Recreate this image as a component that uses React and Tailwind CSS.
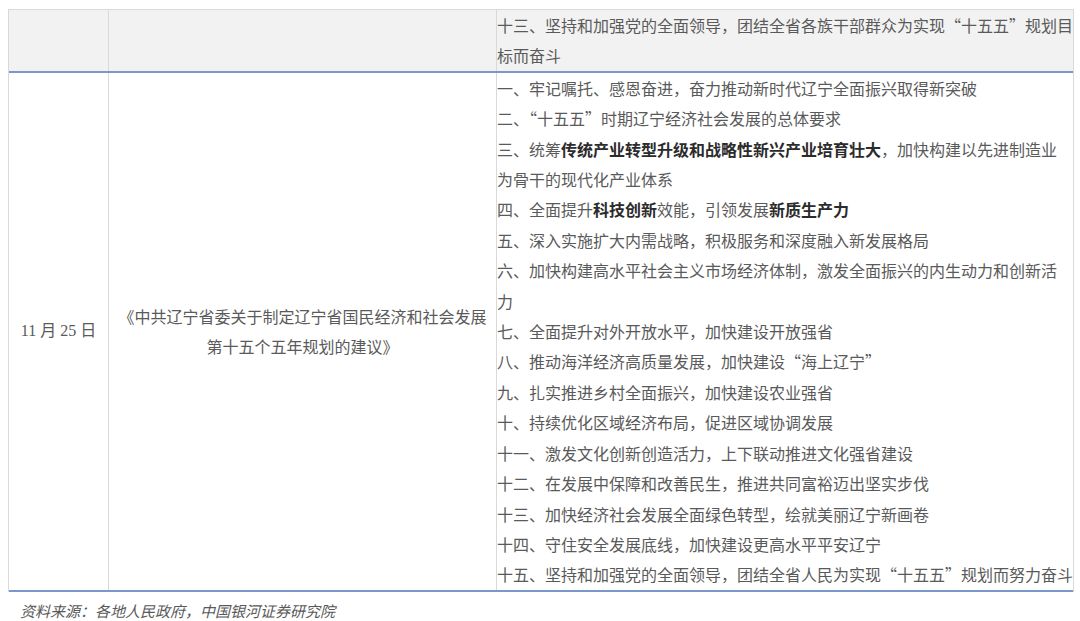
const FONT = { fontFamily: '"Noto Sans CJK SC", "Liberation Serif", sans-serif' }
const DATE_FONT = { fontFamily: '"Liberation Serif", "Noto Sans CJK SC", serif' }

const ITEMS = [
  ['一、牢记嘱托、感恩奋进，奋力推动新时代辽宁全面振兴取得新突破'],
  ['二、“十五五”时期辽宁经济社会发展的总体要求'],
  [
    '三、统筹',
    { b: '传统产业转型升级和战略性新兴产业培育壮大' },
    '，加快构建以先进制造业',
    { br: true },
    '为骨干的现代化产业体系',
  ],
  ['四、全面提升', { b: '科技创新' }, '效能，引领发展', { b: '新质生产力' }],
  ['五、深入实施扩大内需战略，积极服务和深度融入新发展格局'],
  ['六、加快构建高水平社会主义市场经济体制，激发全面振兴的内生动力和创新活', { br: true }, '力'],
  ['七、全面提升对外开放水平，加快建设开放强省'],
  ['八、推动海洋经济高质量发展，加快建设“海上辽宁”'],
  ['九、扎实推进乡村全面振兴，加快建设农业强省'],
  ['十、持续优化区域经济布局，促进区域协调发展'],
  ['十一、激发文化创新创造活力，上下联动推进文化强省建设'],
  ['十二、在发展中保障和改善民生，推进共同富裕迈出坚实步伐'],
  ['十三、加快经济社会发展全面绿色转型，绘就美丽辽宁新画卷'],
  ['十四、守住安全发展底线，加快建设更高水平平安辽宁'],
  ['十五、坚持和加强党的全面领导，团结全省人民为实现“十五五”规划而努力奋斗'],
]

function Line({ parts }) {
  return (
    <div className="whitespace-nowrap">
      {parts.map((p, i) => {
        if (typeof p === 'string') return <span key={i}>{p}</span>
        if (p.br) return <br key={i} />
        return <strong key={i} className="font-bold text-[#2b2b2b]">{p.b}</strong>
      })}
    </div>
  )
}

export default function App() {
  return (
    <div className="w-[1080px] h-[621px] bg-white pt-[9px] pl-[8px] text-[16px] leading-[30.4px] text-[#5a5a5a]" style={FONT}>
      <div className="w-[1066px] border-t border-l border-r border-[#d9d9d9]">
        {/* header row */}
        <div className="grid grid-cols-[100px_388px_576px] bg-[#f2f2f2] border-b-2 border-[#7a97c9]">
          <div className="border-r border-[#d9d9d9]" />
          <div className="border-r border-[#d9d9d9]" />
          <div className="whitespace-nowrap">
            十三、坚持和加强党的全面领导，团结全省各族干部群众为实现“十五五”规划目
            <br />
            标而奋斗
          </div>
        </div>

        {/* body row */}
        <div className="grid grid-cols-[100px_388px_576px] border-b-2 border-[#7a97c9]">
          <div className="border-r border-[#d9d9d9] flex items-center justify-center" style={DATE_FONT}>
            11 月 25 日
          </div>
          <div className="border-r border-[#d9d9d9] flex items-center justify-center text-center whitespace-nowrap">
            《中共辽宁省委关于制定辽宁省国民经济和社会发展
            <br />
            第十五个五年规划的建议》
          </div>
          <div>
            {ITEMS.map((parts, i) => (
              <Line key={i} parts={parts} />
            ))}
          </div>
        </div>
      </div>

      <div className="pl-[12px] pt-[4px] text-[15px] italic text-[#595959]">
        资料来源：各地人民政府，中国银河证券研究院
      </div>
    </div>
  )
}
